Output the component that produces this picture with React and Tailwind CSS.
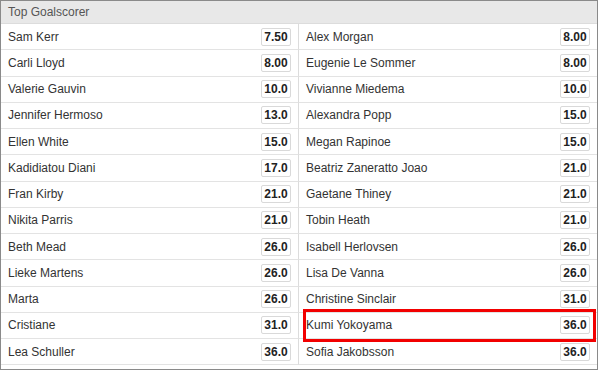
import React from 'react';

const left = [
  ['Sam Kerr', '7.50'],
  ['Carli Lloyd', '8.00'],
  ['Valerie Gauvin', '10.0'],
  ['Jennifer Hermoso', '13.0'],
  ['Ellen White', '15.0'],
  ['Kadidiatou Diani', '17.0'],
  ['Fran Kirby', '21.0'],
  ['Nikita Parris', '21.0'],
  ['Beth Mead', '26.0'],
  ['Lieke Martens', '26.0'],
  ['Marta', '26.0'],
  ['Cristiane', '31.0'],
  ['Lea Schuller', '36.0'],
];

const right = [
  ['Alex Morgan', '8.00'],
  ['Eugenie Le Sommer', '8.00'],
  ['Vivianne Miedema', '10.0'],
  ['Alexandra Popp', '15.0'],
  ['Megan Rapinoe', '15.0'],
  ['Beatriz Zaneratto Joao', '21.0'],
  ['Gaetane Thiney', '21.0'],
  ['Tobin Heath', '21.0'],
  ['Isabell Herlovsen', '26.0'],
  ['Lisa De Vanna', '26.0'],
  ['Christine Sinclair', '31.0'],
  ['Kumi Yokoyama', '36.0'],
  ['Sofia Jakobsson', '36.0'],
];

function Row({ name, odds, first }) {
  return (
    <div className={'h-[26.25px] flex items-center justify-between pl-[7px] pr-[7px] border-b border-[#e3e3e3] ' + (first ? 'border-r border-r-[#dcdcdc]' : '')}>
      <span className="text-[12px] text-[#333]">{name}</span>
      <span className="w-[30px] h-[18px] flex items-center justify-center border border-[#d9d9d9] rounded-[2px] bg-white text-[12px] font-bold text-[#222]">
        {odds}
      </span>
    </div>
  );
}

export default function App() {
  return (
    <div className="w-[600px] h-[372px] bg-white" style={{ fontFamily: '"Liberation Sans", Arial, sans-serif' }}>
      <div className="relative w-[598px] h-[370px] border border-[#8a8a8a] overflow-hidden">
        <div className="h-[23px] flex items-center pl-[7px] bg-[#e8e8e8] border-b border-[#dcdcdc] text-[12px] text-[#555]">
          Top Goalscorer
        </div>
        <div className="grid grid-cols-2">
          <div>
            {left.map(([n, o]) => (
              <Row key={n} name={n} odds={o} first />
            ))}
          </div>
          <div>
            {right.map(([n, o]) => (
              <Row key={n} name={n} odds={o} />
            ))}
          </div>
        </div>
        {/* highlight annotation */}
        <div className="absolute left-[302px] top-[308px] w-[293px] h-[33px] border-[3px] border-[#f20000]" />
      </div>
    </div>
  );
}
